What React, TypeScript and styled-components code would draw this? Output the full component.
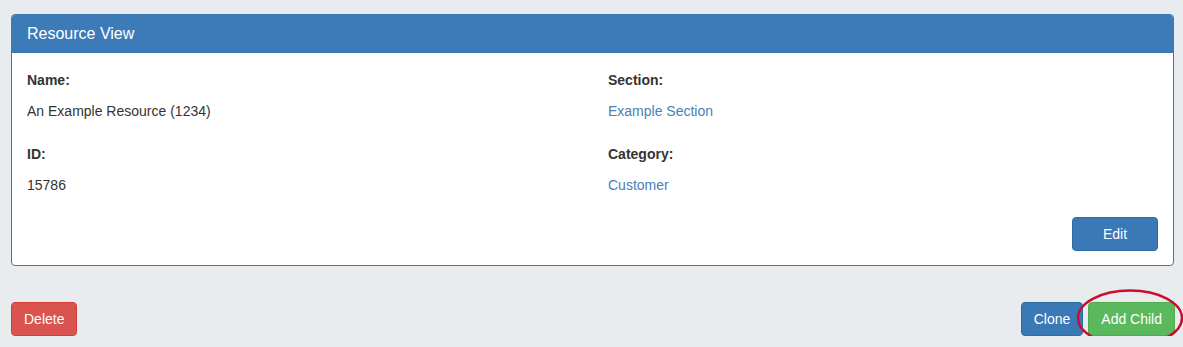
import React from 'react';
import styled, { createGlobalStyle } from 'styled-components';

const GlobalStyle = createGlobalStyle`
    html, body {
        margin: 0;
        padding: 0;
        background-color: #e9ecef;
        font-family: "Liberation Sans", Arial, Helvetica, sans-serif;
        font-size: 14px;
        line-height: 20px;
        color: #333;
    }
`;

type Field = { label: string; value: string; link?: boolean };

const fields: Field[][] = [
    [
        { label: 'Name:', value: 'An Example Resource (1234)' },
        { label: 'ID:', value: '15786' },
    ],
    [
        { label: 'Section:', value: 'Example Section', link: true },
        { label: 'Category:', value: 'Customer', link: true },
    ],
];

const App = () => {
    return (
        <Page>
            <GlobalStyle />
            <Panel>
                <PanelHeading>Resource View</PanelHeading>
                <PanelBody>
                    <Columns>
                        {fields.map((col, i) => (
                            <Column key={i}>
                                {col.map((f) => (
                                    <FieldBlock key={f.label}>
                                        <Label>{f.label}</Label>
                                        <Value $link={f.link}>{f.value}</Value>
                                    </FieldBlock>
                                ))}
                            </Column>
                        ))}
                    </Columns>
                    <EditRow>
                        <Button $variant="primary" $width={86}>Edit</Button>
                    </EditRow>
                </PanelBody>
            </Panel>

            <ActionBar>
                <Button $variant="danger">Delete</Button>
                <RightActions>
                    <Button $variant="primary">Clone</Button>
                    <Highlight>
                        <Button $variant="success">Add Child</Button>
                        <Ellipse width="108" height="60" viewBox="0 0 108 60">
                            <ellipse cx="54" cy="30" rx="52" ry="27.5" fill="none" stroke="#c8102e" strokeWidth="2.5" />
                        </Ellipse>
                    </Highlight>
                </RightActions>
            </ActionBar>
        </Page>
    );
};

const Page = styled.div`
    padding: 14px 9px 0 11px;
`;

const Panel = styled.div`
    background-color: #fff;
    border: 1px solid #3a78b6;
    border-radius: 4px;
    overflow: hidden;
`;

const PanelHeading = styled.div`
    background-color: #3c7ab8;
    color: #fff;
    font-size: 16px;
    line-height: 18px;
    padding: 10px 15px 10px 15px;
    height: 18px;
`;

const PanelBody = styled.div`
    padding: 17px 15px 14px 15px;
`;

const Columns = styled.div`
    display: grid;
    grid-template-columns: 1fr 1fr;
    column-gap: 31px;
`;

const Column = styled.div`
    display: flex;
    flex-direction: column;
    gap: 23px;
`;

const FieldBlock = styled.div`
    display: flex;
    flex-direction: column;
    gap: 11px;
`;

const Label = styled.div`
    font-weight: bold;
    color: #333;
`;

const Value = styled.div<{ $link?: boolean }>`
    color: ${(p) => (p.$link ? '#4a7fb5' : '#333')};
`;

const EditRow = styled.div`
    display: flex;
    justify-content: flex-end;
    margin-top: 22px;
`;

const colors = {
    primary: { bg: '#3a78b6', border: '#2e6da4' },
    danger: { bg: '#d9534f', border: '#d43f3a' },
    success: { bg: '#5cb85c', border: '#4cae4c' },
};

const Button = styled.button<{ $variant: keyof typeof colors; $width?: number }>`
    box-sizing: border-box;
    height: 34px;
    ${(p) => (p.$width ? `width: ${p.$width}px;` : '')}
    padding: 6px 12px;
    font-family: "Liberation Sans", Arial, Helvetica, sans-serif;
    font-size: 14px;
    line-height: 20px;
    color: #fff;
    background-color: ${(p) => colors[p.$variant].bg};
    border: 1px solid ${(p) => colors[p.$variant].border};
    border-radius: 4px;
    cursor: pointer;
`;

const ActionBar = styled.div`
    display: flex;
    justify-content: space-between;
    align-items: center;
    margin-top: 36px;
`;

const RightActions = styled.div`
    display: flex;
    gap: 5px;
    margin-right: -1px;
`;

const Highlight = styled.div`
    position: relative;
`;

const Ellipse = styled.svg`
    position: absolute;
    left: -12px;
    top: -14px;
    pointer-events: none;
`;

export default App;
